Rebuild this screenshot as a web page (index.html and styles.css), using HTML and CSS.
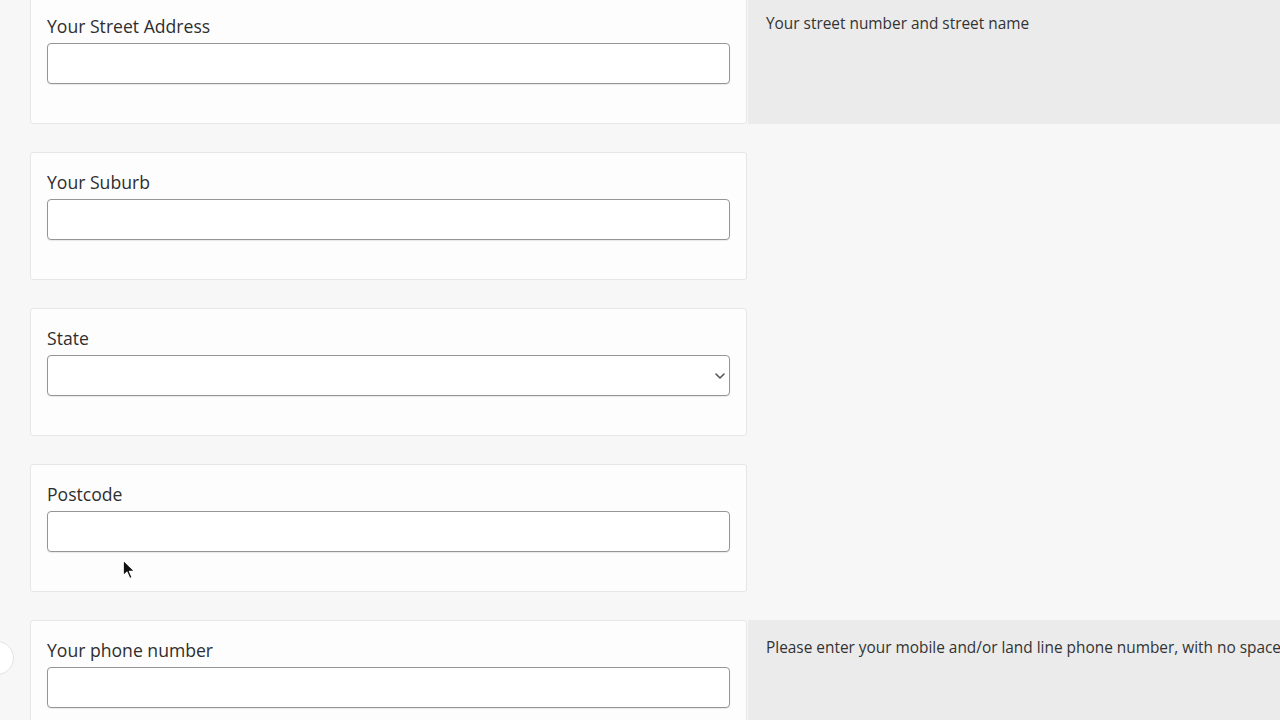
FILE: index.html
```html
<!DOCTYPE html>
<html lang="en">
<head>
<meta charset="utf-8">
<title>Address form</title>
<link rel="stylesheet" href="styles.css">
</head>
<body>
<div class="page">
  <div class="row">
    <div class="card">
      <label class="label" for="street">Your Street Address</label>
      <input class="field" id="street" type="text">
    </div>
    <div class="help">Your street number and street name</div>
  </div>
  <div class="row">
    <div class="card">
      <label class="label" for="suburb">Your Suburb</label>
      <input class="field" id="suburb" type="text">
    </div>
  </div>
  <div class="row">
    <div class="card">
      <label class="label" for="state">State</label>
      <div class="select-wrap">
        <select class="field select" id="state"><option></option></select>
        <svg class="chev" width="10" height="6" viewBox="0 0 10 6"><path d="M1 1 L5 5 L9 1" fill="none" stroke="#555" stroke-width="1.6" stroke-linecap="round" stroke-linejoin="round"/></svg>
      </div>
    </div>
  </div>
  <div class="row">
    <div class="card">
      <label class="label" for="postcode">Postcode</label>
      <input class="field" id="postcode" type="text">
    </div>
  </div>
  <div class="row">
    <div class="card">
      <label class="label" for="phone">Your phone number</label>
      <input class="field" id="phone" type="text">
    </div>
    <div class="help">Please enter your mobile and/or land line phone number, with no spaces</div>
  </div>
</div>
<div class="side-dot"></div>
<svg class="cursor" width="15" height="21" viewBox="0 0 14 20"><path d="M1 1 L1 16 L4.6 12.6 L7.2 18.6 L9.6 17.6 L7 11.8 L12 11.8 Z" fill="#111" stroke="#fff" stroke-width="1.2" stroke-linejoin="round"/></svg>
</body>
</html>
```
FILE: styles.css
```css
html, body {
  margin: 0;
  padding: 0;
  height: 100%;
  overflow: hidden;
  background: #f7f7f7;
  font-family: "Open Sans", "Noto Sans", "Liberation Sans", sans-serif;
  color: #333;
}
.page {
  margin-top: -4px;
  padding-left: 30px;
}
.row {
  display: flex;
  margin-bottom: 28px;
}
.card {
  width: 717px;
  flex: none;
  box-sizing: border-box;
  background: #fdfdfd;
  border: 1px solid #e6e6e6;
  border-radius: 3px;
  padding: 17px 16px 39px;
}
.label {
  display: block;
  font-size: 17.6px;
  line-height: 24px;
  margin-bottom: 5px;
  color: #2e2e2e;
}
.field {
  display: block;
  box-sizing: border-box;
  width: 100%;
  height: 41px;
  margin: 0;
  border: 1px solid #959595;
  border-radius: 4px;
  background: #fff;
  box-shadow: 0 1px 1px rgba(0,0,0,0.08);
  font-family: inherit;
  font-size: 15px;
  padding: 0 10px;
}
.select-wrap {
  position: relative;
}
.select {
  appearance: none;
  -webkit-appearance: none;
}
.chev {
  position: absolute;
  right: 5px;
  top: 18px;
}
.help {
  flex: 1;
  background: #ebebeb;
  padding: 17px 0 0 18px;
  font-size: 15.4px;
  line-height: 22px;
  color: #333;
  white-space: nowrap;
  overflow: hidden;
  margin-left: 1px;
  margin-right: -60px;
}
.side-dot {
  position: absolute;
  left: -20px;
  top: 641px;
  width: 32px;
  height: 32px;
  border-radius: 50%;
  background: #fff;
  border: 1px solid #e3e3e3;
}
.cursor {
  position: absolute;
  left: 122px;
  top: 559px;
}
```
